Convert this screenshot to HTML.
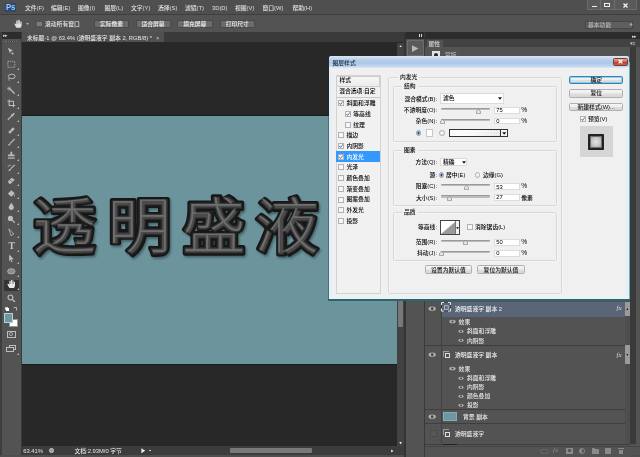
<!DOCTYPE html>
<html lang="zh-CN">
<head>
<meta charset="utf-8">
<title>Photoshop - 图层样式</title>
<style>
html,body{margin:0;padding:0;}
body{width:640px;height:457px;overflow:hidden;background:#535353;position:relative;
 font-family:"Liberation Sans","Noto Sans CJK SC",sans-serif;font-size:5.8px;line-height:8px;color:#dcdcdc;font-weight:500;}
div,span,svg{position:absolute;box-sizing:border-box;}
.t{white-space:nowrap;line-height:8px;height:8px;}
.r{text-align:right;}
.c{text-align:center;}
/* top */
#menubar{left:0;top:0;width:640px;height:14px;background:#4f4f4f;}
#menubar .t{top:4px;color:#e0e0e0;}
#optbar{left:0;top:15px;width:640px;height:17px;background:#535353;}
.ob{top:5px;height:8px;background:#6b6b6b;border:0.5px solid #484848;border-radius:1px;color:#f0f0f0;text-align:center;line-height:7px;white-space:nowrap;}
#tabbar{left:22px;top:32px;width:383px;height:10.3px;background:#3a3a3a;}
#tab{left:0;top:0;width:142px;height:10.3px;background:#505050;}
#work{left:22px;top:42.3px;width:383px;height:403.7px;background:#282828;}
#canvas{left:22px;top:116.4px;width:375px;height:247.8px;background:#6b949d;overflow:hidden;}
#tools{left:0;top:32px;width:22px;height:425px;background:#535353;}
/* dialog */
#dlg{left:329px;top:56px;width:300.2px;height:243.6px;background:#f0f0f0;color:#000;border-radius:2.5px 2.5px 0 0;}
#dlg .t{color:#000;font-weight:500;}
.gb{border:0.8px solid #d8d8d8;border-radius:1.5px;box-shadow:0.5px 0.5px 0 #fafafa, inset 0.5px 0.5px 0 #fafafa;}
.gl{background:#f0f0f0;padding:0 2px;}
.inp{background:#fff;border:0.5px solid #dcdcdc;height:7px;}
.btn{height:9px;font-weight:500;border:0.5px solid #b0b0b0;border-radius:1.5px;background:linear-gradient(#f5f5f5,#ededed 48%,#e0e0e0 52%,#d6d6d6);color:#111;text-align:center;line-height:8px;white-space:nowrap;}
.sl{height:2.2px;background:#bcbcbc;border-top:0.7px solid #9a9a9a;border-radius:1px;}
.cb{width:6px;height:6px;background:#f7f7f7;border:0.6px solid #b2b2b2;}
.row{left:0;width:45px;height:10.7px;}
</style>
</head>
<body>
<div id="root" style="left:0;top:0;width:640px;height:457px;will-change:transform;">
<!-- MENU BAR -->
<div id="menubar">
  <div style="left:4.8px;top:2.6px;width:11.6px;height:9.6px;background:#2a4a74;"></div>
  <span class="t" style="left:6.2px;top:2px;font-size:9.6px;line-height:10px;height:10px;font-weight:bold;color:#9ecbf6;letter-spacing:-0.2px;transform:scaleX(0.8);transform-origin:0 0">Ps</span>
  <span class="t" style="left:25px">文件(F)</span>
  <span class="t" style="left:51px">编辑(E)</span>
  <span class="t" style="left:78px">图像(I)</span>
  <span class="t" style="left:104.5px">图层(L)</span>
  <span class="t" style="left:131px">文字(Y)</span>
  <span class="t" style="left:158px">选择(S)</span>
  <span class="t" style="left:185px">滤镜(T)</span>
  <span class="t" style="left:212px">3D(D)</span>
  <span class="t" style="left:235px">视图(V)</span>
  <span class="t" style="left:262.5px">窗口(W)</span>
  <span class="t" style="left:292.5px">帮助(H)</span>
</div>
<div style="left:0;top:13.6px;width:640px;height:1px;background:#3e3e3e"></div><div style="left:0;top:14.6px;width:640px;height:0.7px;background:#5d5d5d"></div>
<div style="left:85px;top:16px;width:0.8px;height:15px;background:#404040"></div><div style="left:85.8px;top:16px;width:0.6px;height:15px;background:#5e5e5e"></div>
<div style="left:0;top:15px;width:1.6px;height:17px;background:#3e3e3e"></div>
<!-- OPTIONS BAR -->
<div id="optbar">
  <svg style="left:13.5px;top:4px" width="9" height="9" viewBox="0 0 10 10"><path d="M2.6 9.6Q1 7.4 0.4 5.4Q1.3 4.6 2.5 6.2V2.2Q3.1 1.4 3.7 2.2V5H4.1V1.2Q4.7 0.4 5.3 1.2V5H5.7V1.8Q6.3 1 6.9 1.8V5.2H7.3V3.2Q7.9 2.5 8.5 3.2V7Q8.2 8.8 7.4 9.6Z" fill="#e0e0e0"/></svg>
  <svg style="left:25.5px;top:8px" width="3" height="2" viewBox="0 0 4 3"><path d="M0 0.3H4L2 2.8Z" fill="#ddd"/></svg>
  <div style="left:37px;top:6.6px;width:4.6px;height:4.8px;background:#7c7c7c"></div>
  <span class="t" style="left:45px;top:5px;color:#e8e8e8">滚动所有窗口</span>
  <div class="ob" style="left:94px;width:35px">实际像素</div>
  <div class="ob" style="left:135.5px;width:35px">适合屏幕</div>
  <div class="ob" style="left:177px;width:35.5px">填充屏幕</div>
  <div class="ob" style="left:219.5px;width:35.5px">打印尺寸</div>
</div>
<!-- TAB BAR / WORK AREA -->
<div id="tabbar"><div id="tab"><span class="t" style="left:5px;top:2px;color:#e6e6e6">未标题-1 @ 63.4% (透明盛液字 副本 2, RGB/8) *</span><span class="t" style="left:134px;top:2px;color:#ccc">×</span></div></div>
<div id="work"></div>
<div style="left:22px;top:115.2px;width:376px;height:249.8px;background:#181c1c"></div>
<div id="canvas">
<svg style="left:0;top:0" width="375" height="248" viewBox="0 0 375 248">
<defs>
<filter id="sh" x="-5%" y="-10%" width="110%" height="125%"><feGaussianBlur stdDeviation="1.2"/></filter>
<filter id="hl" x="-5%" y="-10%" width="110%" height="120%"><feGaussianBlur stdDeviation="0.7"/></filter>
</defs>
<g font-family="'Noto Sans CJK SC',sans-serif" font-size="64" font-weight="500" stroke-linejoin="round" stroke-linecap="round">
<g id="bigtext" transform="translate(0,132.8) scale(1,0.965) translate(0,-132.3)">
<text y="132.3" fill="#000" stroke="#000" stroke-width="4" opacity="0.35" filter="url(#sh)" transform="translate(1.2,2)" font-weight="700"><tspan x="10.5">透</tspan><tspan x="85.5">明</tspan><tspan x="160">盛</tspan><tspan x="233">液</tspan></text>
<text y="132.3" fill="#171717" stroke="#171717" stroke-width="4.2" font-weight="700"><tspan x="10.5">透</tspan><tspan x="85.5">明</tspan><tspan x="160">盛</tspan><tspan x="233">液</tspan></text>
<text y="132.3" fill="#4a4a4a" stroke="#2a2a2a" stroke-width="1.2" font-weight="500"><tspan x="10.5">透</tspan><tspan x="85.5">明</tspan><tspan x="160">盛</tspan><tspan x="233">液</tspan></text>
<text y="132.3" fill="#9a9a9a" opacity="0.45" filter="url(#hl)" transform="translate(-0.3,-0.5)" font-weight="100"><tspan x="10.5">透</tspan><tspan x="85.5">明</tspan><tspan x="160">盛</tspan><tspan x="233">液</tspan></text>
</g>
</g>
</svg>
</div>
<div id="tools">
<div style="left:0;top:0;width:1.6px;height:425px;background:#3e3e3e"></div>
<div style="left:1.6px;top:0;width:19px;height:6.5px;background:#2c2c2c"></div>
<span class="t" style="left:3px;top:-1px;font-size:5px;color:#ccc;letter-spacing:-1.5px">▸▸</span>
<div style="left:20.8px;top:0;width:1.2px;height:425px;background:#3a3a3a"></div>
<div style="left:5px;top:8.5px;width:12px;height:1px;background:#3f3f3f;border-top:0.5px dotted #777"></div>
<svg style="left:7.1px;top:15.2px" width="8.6" height="8.6" viewBox="0 0 10 10"><path d="M1 1L7 4L4.5 5L3.5 7.5Z" fill="#bdbdbd"/><path d="M6.5 6v3M5 7.5h3" stroke="#bdbdbd" stroke-width="0.9"/></svg>
<svg style="left:7.1px;top:28.2px" width="8.6" height="8.6" viewBox="0 0 10 10"><rect x="1" y="1.5" width="8" height="7" fill="none" stroke="#bdbdbd" stroke-width="1" stroke-dasharray="1.2 1"/></svg>
<svg style="left:16.8px;top:36.0px" width="2" height="2" viewBox="0 0 2 2"><path d="M2 0V2H0Z" fill="#bbb"/></svg>
<svg style="left:7.1px;top:41.2px" width="8.6" height="8.6" viewBox="0 0 10 10"><ellipse cx="5.5" cy="4" rx="4" ry="2.6" fill="none" stroke="#bdbdbd" stroke-width="1.1"/><path d="M2.5 6Q1.5 7.5 2.5 9" stroke="#bdbdbd" fill="none" stroke-width="0.9"/></svg>
<svg style="left:16.8px;top:49.0px" width="2" height="2" viewBox="0 0 2 2"><path d="M2 0V2H0Z" fill="#bbb"/></svg>
<svg style="left:7.1px;top:54.2px" width="8.6" height="8.6" viewBox="0 0 10 10"><path d="M3.5 3.5L9 9" stroke="#bdbdbd" stroke-width="1.4"/><path d="M2.5 0.5v5M0 3h5M0.8 1.2l3.4 3.4M4.2 1.2L0.8 4.6" stroke="#bdbdbd" stroke-width="0.7"/></svg>
<svg style="left:16.8px;top:62.0px" width="2" height="2" viewBox="0 0 2 2"><path d="M2 0V2H0Z" fill="#bbb"/></svg>
<svg style="left:7.1px;top:67.2px" width="8.6" height="8.6" viewBox="0 0 10 10"><path d="M2.5 0.5V7.5H9.5M0.5 2.5H7.5V9.5" stroke="#bdbdbd" stroke-width="1.2" fill="none"/></svg>
<svg style="left:16.8px;top:75.0px" width="2" height="2" viewBox="0 0 2 2"><path d="M2 0V2H0Z" fill="#bbb"/></svg>
<svg style="left:7.1px;top:80.2px" width="8.6" height="8.6" viewBox="0 0 10 10"><path d="M1 9L5.5 4.5" stroke="#bdbdbd" stroke-width="1.3"/><path d="M5 3L7 5M6 4L8.5 1.5" stroke="#bdbdbd" stroke-width="1.8"/></svg>
<svg style="left:16.8px;top:88.0px" width="2" height="2" viewBox="0 0 2 2"><path d="M2 0V2H0Z" fill="#bbb"/></svg>
<svg style="left:7.1px;top:93.7px" width="8.6" height="8.6" viewBox="0 0 10 10"><path d="M1.5 7L7 1.5L9 3.5L3.5 9Z" fill="#bdbdbd"/><path d="M4 5L5.5 6.5" stroke="#555" stroke-width="0.8"/></svg>
<svg style="left:16.8px;top:101.5px" width="2" height="2" viewBox="0 0 2 2"><path d="M2 0V2H0Z" fill="#bbb"/></svg>
<svg style="left:7.1px;top:106.2px" width="8.6" height="8.6" viewBox="0 0 10 10"><path d="M9 1L4 6" stroke="#bdbdbd" stroke-width="1.4"/><path d="M3.8 5.8Q1.5 6.5 1 9Q3.5 8.8 4.4 6.6Z" fill="#bdbdbd"/></svg>
<svg style="left:16.8px;top:114.0px" width="2" height="2" viewBox="0 0 2 2"><path d="M2 0V2H0Z" fill="#bbb"/></svg>
<svg style="left:7.1px;top:119.2px" width="8.6" height="8.6" viewBox="0 0 10 10"><path d="M4 1h2v3.2h2.8v2H1.2v-2H4Z" fill="#bdbdbd"/><rect x="1" y="7.5" width="8" height="1.4" fill="#bdbdbd"/></svg>
<svg style="left:16.8px;top:127.0px" width="2" height="2" viewBox="0 0 2 2"><path d="M2 0V2H0Z" fill="#bbb"/></svg>
<svg style="left:7.1px;top:131.7px" width="8.6" height="8.6" viewBox="0 0 10 10"><path d="M9 1L4.5 5.5" stroke="#bdbdbd" stroke-width="1.3"/><path d="M4.2 5.3Q2 6 1.5 8.5Q4 8.3 4.8 6.2Z" fill="#bdbdbd"/><path d="M1 3.5A3 3 0 0 1 5 1.5" stroke="#bdbdbd" fill="none" stroke-width="0.8"/></svg>
<svg style="left:16.8px;top:139.5px" width="2" height="2" viewBox="0 0 2 2"><path d="M2 0V2H0Z" fill="#bbb"/></svg>
<svg style="left:7.1px;top:144.2px" width="8.6" height="8.6" viewBox="0 0 10 10"><path d="M1 6.5L5.5 2L9 4.5L4.5 9H2.5Z" fill="#bdbdbd"/><path d="M3 4.5L6.5 7" stroke="#555" stroke-width="0.7"/></svg>
<svg style="left:16.8px;top:152.0px" width="2" height="2" viewBox="0 0 2 2"><path d="M2 0V2H0Z" fill="#bbb"/></svg>
<svg style="left:7.1px;top:157.2px" width="8.6" height="8.6" viewBox="0 0 10 10"><path d="M1 5.5L5 1.5L9 5L5 9Z" fill="#bdbdbd"/><path d="M8.5 6Q9.8 8 8.5 9Q7.4 8 8.5 6Z" fill="#bdbdbd"/></svg>
<svg style="left:16.8px;top:165.0px" width="2" height="2" viewBox="0 0 2 2"><path d="M2 0V2H0Z" fill="#bbb"/></svg>
<svg style="left:7.1px;top:169.7px" width="8.6" height="8.6" viewBox="0 0 10 10"><path d="M5 0.8Q8.5 5 8 7Q7.2 9.3 5 9.3Q2.8 9.3 2 7Q1.5 5 5 0.8Z" fill="#bdbdbd"/></svg>
<svg style="left:16.8px;top:177.5px" width="2" height="2" viewBox="0 0 2 2"><path d="M2 0V2H0Z" fill="#bbb"/></svg>
<svg style="left:7.1px;top:182.7px" width="8.6" height="8.6" viewBox="0 0 10 10"><circle cx="4" cy="4" r="3" fill="#bdbdbd"/><path d="M6 6L9 9" stroke="#bdbdbd" stroke-width="1.5"/></svg>
<svg style="left:16.8px;top:190.5px" width="2" height="2" viewBox="0 0 2 2"><path d="M2 0V2H0Z" fill="#bbb"/></svg>
<svg style="left:7.1px;top:195.7px" width="8.6" height="8.6" viewBox="0 0 10 10"><path d="M2 1L8 7L6 7.5L5 9.5Z" fill="none" stroke="#bdbdbd" stroke-width="0.9"/></svg>
<svg style="left:16.8px;top:203.5px" width="2" height="2" viewBox="0 0 2 2"><path d="M2 0V2H0Z" fill="#bbb"/></svg>
<span class="t" style="left:8.6px;top:208.6px;font-family:'Liberation Serif',serif;font-size:9.6px;font-weight:bold;color:#c4c4c4;line-height:10px;height:10px">T</span>
<svg style="left:16.8px;top:217.5px" width="2" height="2" viewBox="0 0 2 2"><path d="M2 0V2H0Z" fill="#bbb"/></svg>
<svg style="left:7.1px;top:222.2px" width="8.6" height="8.6" viewBox="0 0 10 10"><path d="M2.5 0.5L8 6H5.2L6.5 9L5.2 9.5L4 6.6L2.5 8.5Z" fill="#bdbdbd"/></svg>
<svg style="left:16.8px;top:230.0px" width="2" height="2" viewBox="0 0 2 2"><path d="M2 0V2H0Z" fill="#bbb"/></svg>
<svg style="left:7.1px;top:234.7px" width="8.6" height="8.6" viewBox="0 0 10 10"><ellipse cx="5" cy="5" rx="4.3" ry="3" fill="#8a8a8a" stroke="#bdbdbd" stroke-width="0.9"/></svg>
<svg style="left:16.8px;top:242.5px" width="2" height="2" viewBox="0 0 2 2"><path d="M2 0V2H0Z" fill="#bbb"/></svg>
<div style="left:4.2px;top:247.6px;width:14.6px;height:11px;background:#343434;border-radius:1px"></div>
<svg style="left:6.7px;top:247.3px" width="9.4" height="9.4" viewBox="0 0 10 10"><path d="M2.6 9.6Q1 7.4 0.4 5.4Q1.3 4.6 2.5 6.2V2.2Q3.1 1.4 3.7 2.2V5H4.1V1.2Q4.7 0.4 5.3 1.2V5H5.7V1.8Q6.3 1 6.9 1.8V5.2H7.3V3.2Q7.9 2.5 8.5 3.2V7Q8.2 8.8 7.4 9.6Z" fill="#e8e8e8"/></svg>
<svg style="left:16.8px;top:255.5px" width="2" height="2" viewBox="0 0 2 2"><path d="M2 0V2H0Z" fill="#bbb"/></svg>
<svg style="left:7.1px;top:261.7px" width="8.6" height="8.6" viewBox="0 0 10 10"><circle cx="4" cy="4" r="2.8" fill="none" stroke="#bdbdbd" stroke-width="1.3"/><path d="M6 6L9.3 9.3" stroke="#bdbdbd" stroke-width="1.6"/></svg>
<div style="left:4.5px;top:274.5px;width:3px;height:3px;background:#111;border:0.5px solid #ccc"></div>
<div style="left:6px;top:276px;width:3px;height:3px;background:#fff"></div>
<svg style="left:13px;top:274px" width="5" height="5" viewBox="0 0 5 5"><path d="M0.5 1.5H3.5V4.5" stroke="#ccc" fill="none" stroke-width="0.8"/></svg>
<div style="left:9.3px;top:286.6px;width:9px;height:8.4px;background:#fff;border:0.5px solid #999"></div>
<div style="left:4.2px;top:281px;width:8.8px;height:9.8px;background:#6c98a6;border:0.8px solid #b9d0d6"></div>
<div style="left:6.5px;top:299.3px;width:9px;height:7px;border:0.9px solid #bdbdbd"></div>
<div style="left:9.3px;top:300.3px;width:3.4px;height:3.4px;border-radius:50%;border:0.8px solid #bdbdbd"></div>
<div style="left:8.5px;top:312.8px;width:7.5px;height:5.5px;border:0.9px solid #bdbdbd"></div>
<div style="left:6px;top:314.8px;width:7.5px;height:5.5px;border:0.9px solid #bdbdbd;background:#535353"></div>
<svg style="left:16.8px;top:320.5px" width="2" height="2" viewBox="0 0 2 2"><path d="M2 0V2H0Z" fill="#bbb"/></svg>
</div>


<!-- STATUS BAR -->
<div style="left:22px;top:446px;width:382px;height:9px;background:#3c3c3c"></div>
<div style="left:0;top:455px;width:640px;height:2px;background:#4e4e4e"></div>
<span class="t" style="left:23.2px;top:446.7px;color:#e4e4e4">63.41%</span>
<div style="left:49.2px;top:448.2px;width:4.6px;height:4.6px;border-radius:50%;background:#9c9c9c;border:0.8px solid #c4c4c4"></div>
<span class="t" style="left:74.5px;top:446.7px;color:#e4e4e4">文档:2.93M/0 字节</span>
<svg style="left:141px;top:448px" width="4.5" height="5.5" viewBox="0 0 4 5"><path d="M0.3 0.2L3.8 2.5L0.3 4.8Z" fill="#eee"/></svg>
<div style="left:149.3px;top:450px;width:1.4px;height:1.4px;background:#ccc"></div>
<div style="left:230px;top:447.7px;width:82px;height:5.8px;background:#797979;border-radius:1px"></div>
<svg style="left:391.4px;top:449.4px" width="2.6" height="3.8" viewBox="0 0 4 5"><path d="M0.3 0.2L3.8 2.5L0.3 4.8Z" fill="#eee"/></svg>
<!-- vertical scrollbar -->
<div style="left:397px;top:43px;width:7px;height:403px;background:#434242"></div>
<div style="left:397.8px;top:57px;width:5.7px;height:269.5px;background:#787878;border-radius:1px"></div>
<svg style="left:399px;top:45px" width="3.2" height="2.4" viewBox="0 0 5 4"><path d="M0.2 3.8L2.5 0.3L4.8 3.8Z" fill="#eee"/></svg>
<svg style="left:399px;top:442.2px" width="3.2" height="2.4" viewBox="0 0 5 4"><path d="M0.2 0.2L2.5 3.7L4.8 0.2Z" fill="#eee"/></svg>
<!-- RIGHT DOCK -->
<div style="left:405px;top:32px;width:235px;height:7px;background:#2c2c2c"></div>
<div style="left:419.2px;top:33.6px;width:1px;height:3px;background:#d8d8d8"></div><div style="left:421.2px;top:33.6px;width:1px;height:3px;background:#d8d8d8"></div>
<span class="t" style="left:632px;top:31.5px;font-size:5px;color:#ccc;letter-spacing:-1.5px">▸▸</span>
<div style="left:404px;top:32px;width:1.5px;height:425px;background:#343434"></div>
<div style="left:405.5px;top:39px;width:19px;height:418px;background:#535353"></div>
<div style="left:407px;top:40px;width:16.5px;height:16px;background:#5a5a5a;border:0.6px solid #6c6c6c"></div>
<svg style="left:411px;top:43.5px" width="9" height="9" viewBox="0 0 9 9"><path d="M1 1.2 L7.4 4.6 L1 8Z" fill="#b8b8b8"/></svg>
<div style="left:424px;top:32px;width:1.2px;height:425px;background:#3a3a3a"></div>
<!-- properties panel stub -->
<div style="left:425px;top:39px;width:215px;height:8px;background:#424242"></div>
<div style="left:426.5px;top:39.5px;width:16.5px;height:7.5px;background:#535353"></div>
<span class="t" style="left:428.5px;top:39.5px;color:#e0e0e0">属性</span>
<span class="t" style="left:629.5px;top:39px;font-size:5px;color:#ccc">▾≡</span>
<div style="left:425px;top:47px;width:215px;height:10px;background:#535353"></div>
<div style="left:432.2px;top:51.2px;width:8.2px;height:6px;background:#e4e4e4"></div>
<div style="left:434.2px;top:52.8px;width:4.2px;height:4px;background:#2a2a2a;border-radius:2px 2px 0 0"></div>
<span class="t" style="left:445px;top:50.6px;color:#b0b0b0">蒙版</span>
<!-- window controls -->
<div style="left:587px;top:0;width:49.5px;height:10px;background:#5a5a5a;border:0.6px solid #6a6a6a;border-top:none"></div>
<div style="left:600px;top:0;width:0.8px;height:10px;background:#6e6e6e"></div>
<div style="left:614px;top:0;width:0.8px;height:10px;background:#6e6e6e"></div>
<div style="left:591.5px;top:5.5px;width:5px;height:1.6px;background:#f0f0f0"></div>
<div style="left:604px;top:2.5px;width:5.5px;height:4.5px;border:1.1px solid #f0f0f0;border-top-width:1.6px"></div>
<svg style="left:622.5px;top:2.5px" width="5" height="5" viewBox="0 0 5 5"><path d="M0.5 0.5L4.5 4.5M4.5 0.5L0.5 4.5" stroke="#f4f4f4" stroke-width="1.3"/></svg>
<!-- workspace switcher -->
<div style="left:585px;top:20.5px;width:48px;height:8px;background:#5f5f5f;border:0.6px solid #464646"></div>
<span class="t" style="left:588px;top:20.5px;color:#b4b4b4">基本功能</span>
<span class="t" style="left:629.5px;top:20.5px;font-size:3.2px;color:#aaa">◆</span>
<!-- right edge -->
<div style="left:629.6px;top:47px;width:6.8px;height:397px;background:#3a3a3a"></div>

<!-- LAYERS PANEL -->
<div id="layers" style="left:425px;top:301px;width:204.6px;height:156px;background:#535353">
  <div style="left:16px;top:0;width:0.8px;height:143px;background:#424242"></div>
  <div style="left:16.8px;top:0.8px;width:183.5px;height:14.8px;background:#5a6578"></div>
  <div style="left:0;top:43.5px;width:204.6px;height:0.8px;background:#3e3e3e"></div>
  <div style="left:0;top:108px;width:204.6px;height:0.8px;background:#3e3e3e"></div>
  <div style="left:0;top:122px;width:204.6px;height:0.8px;background:#3e3e3e"></div>
  <div style="left:0;top:142.5px;width:204.6px;height:0.8px;background:#3e3e3e"></div>
  <div style="left:0;top:144.5px;width:215px;height:0.8px;background:#454545"></div>
  <!-- scroll bits -->
  <div style="left:200.2px;top:0;width:4.4px;height:143px;background:#4e4e4e"></div>
  <div style="left:200.2px;top:0.8px;width:4.4px;height:14.7px;background:#9a9a9a"></div>
  <div style="left:200.2px;top:43.6px;width:4.4px;height:19px;background:#9a9a9a"></div>
  <span class="t" style="left:200.6px;top:3.5px;font-size:3.6px;color:#222">▲</span>
  <span class="t" style="left:200.6px;top:50px;font-size:3.6px;color:#222">▼</span>
  <!-- layer 1 -->
  <svg class="eye" style="left:3px;top:4.5px" width="8.4" height="5.4" viewBox="0 0 9 6"><ellipse cx="4.5" cy="3" rx="4" ry="2.4" fill="#b4b4b4"/><circle cx="4.5" cy="3" r="1.6" fill="#484848"/></svg>
  <svg style="left:16px;top:1.2px" width="10" height="9.6" viewBox="0 0 10 9.6"><rect x="0.5" y="0.5" width="9" height="8.6" fill="none" stroke="#26303f" stroke-width="1" stroke-dasharray="1 1"/><path d="M0.5 3V0.5H3M7 0.5H9.5V3M9.5 6.6V9.1H7M3 9.1H0.5V6.6" fill="none" stroke="#e6e6e6" stroke-width="1"/><rect x="3.4" y="3.7" width="3.8" height="3.6" fill="none" stroke="#c8c8c8" stroke-width="0.8"/></svg>
  
  <span class="t" style="left:30px;top:3.5px;color:#f0f0f0">透明盛液字 副本 2</span>
  <span class="t" style="left:191.5px;top:3px;font-family:'Liberation Serif',serif;font-style:italic;font-size:7px;color:#ddd">fx</span>
  <svg class="eye" style="left:24.4px;top:18px" width="7" height="5" viewBox="0 0 9 6"><ellipse cx="4.5" cy="3" rx="4" ry="2.4" fill="#b4b4b4"/><circle cx="4.5" cy="3" r="1.4" fill="#444"/></svg>
  <span class="t" style="left:33.6px;top:16.5px;color:#e8e8e8">效果</span>
  <svg class="eye" style="left:32.8px;top:27.5px" width="6" height="4.5" viewBox="0 0 9 6"><ellipse cx="4.5" cy="3" rx="4" ry="2.4" fill="#b4b4b4"/><circle cx="4.5" cy="3" r="1.4" fill="#444"/></svg>
  <span class="t" style="left:42px;top:26px;color:#e8e8e8">斜面和浮雕</span>
  <svg class="eye" style="left:32.8px;top:37px" width="6" height="4.5" viewBox="0 0 9 6"><ellipse cx="4.5" cy="3" rx="4" ry="2.4" fill="#b4b4b4"/><circle cx="4.5" cy="3" r="1.4" fill="#444"/></svg>
  <span class="t" style="left:42px;top:35.5px;color:#e8e8e8">内阴影</span>
  <!-- layer 2 -->
  <svg class="eye" style="left:3px;top:51px" width="8.4" height="5.4" viewBox="0 0 9 6"><ellipse cx="4.5" cy="3" rx="4" ry="2.4" fill="#b4b4b4"/><circle cx="4.5" cy="3" r="1.6" fill="#484848"/></svg>
  <div style="left:17.5px;top:49.5px;width:6px;height:1px;background:#999"></div>
  <div style="left:17.5px;top:49.5px;width:1px;height:6px;background:#999"></div>
  <div style="left:20.4px;top:52px;width:4.6px;height:5px;border:0.8px solid #ddd"></div>
  <span class="t" style="left:30px;top:50px;color:#f0f0f0">透明盛液字 副本</span>
  <span class="t" style="left:191.5px;top:49.5px;font-family:'Liberation Serif',serif;font-style:italic;font-size:7px;color:#ddd">fx</span>
  <svg class="eye" style="left:24.4px;top:65px" width="7" height="5" viewBox="0 0 9 6"><ellipse cx="4.5" cy="3" rx="4" ry="2.4" fill="#b4b4b4"/><circle cx="4.5" cy="3" r="1.4" fill="#444"/></svg>
  <span class="t" style="left:33.6px;top:63.5px;color:#e8e8e8">效果</span>
  <svg class="eye" style="left:32.8px;top:74.5px" width="6" height="4.5" viewBox="0 0 9 6"><ellipse cx="4.5" cy="3" rx="4" ry="2.4" fill="#b4b4b4"/><circle cx="4.5" cy="3" r="1.4" fill="#444"/></svg>
  <span class="t" style="left:42px;top:73px;color:#e8e8e8">斜面和浮雕</span>
  <svg class="eye" style="left:32.8px;top:83.5px" width="6" height="4.5" viewBox="0 0 9 6"><ellipse cx="4.5" cy="3" rx="4" ry="2.4" fill="#b4b4b4"/><circle cx="4.5" cy="3" r="1.4" fill="#444"/></svg>
  <span class="t" style="left:42px;top:82px;color:#e8e8e8">内阴影</span>
  <svg class="eye" style="left:32.8px;top:92.5px" width="6" height="4.5" viewBox="0 0 9 6"><ellipse cx="4.5" cy="3" rx="4" ry="2.4" fill="#b4b4b4"/><circle cx="4.5" cy="3" r="1.4" fill="#444"/></svg>
  <span class="t" style="left:42px;top:91px;color:#e8e8e8">颜色叠加</span>
  <svg class="eye" style="left:32.8px;top:101.5px" width="6" height="4.5" viewBox="0 0 9 6"><ellipse cx="4.5" cy="3" rx="4" ry="2.4" fill="#b4b4b4"/><circle cx="4.5" cy="3" r="1.4" fill="#444"/></svg>
  <span class="t" style="left:42px;top:100px;color:#e8e8e8">投影</span>
  <!-- layer 3 -->
  <svg class="eye" style="left:3px;top:112.5px" width="8.4" height="5.4" viewBox="0 0 9 6"><ellipse cx="4.5" cy="3" rx="4" ry="2.4" fill="#b4b4b4"/><circle cx="4.5" cy="3" r="1.6" fill="#484848"/></svg>
  <div style="left:17.8px;top:111px;width:14.5px;height:9px;background:#6c98a6;border:0.6px solid #88aab4"></div>
  <span class="t" style="left:38px;top:112px;color:#f0f0f0">背景 副本</span>
  <!-- layer 4 -->
  <div style="left:5px;top:129px;width:6.5px;height:6.5px;background:#585858;border:0.5px solid #4a4a4a"></div>
  <div style="left:17.5px;top:128px;width:6px;height:1px;background:#999"></div>
  <div style="left:17.5px;top:128px;width:1px;height:6px;background:#999"></div>
  <div style="left:20.4px;top:130.5px;width:4.6px;height:5px;border:0.8px solid #ddd"></div>
  <span class="t" style="left:30px;top:128.5px;color:#e8e8e8">透明盛液字</span>
  <div style="left:17.8px;top:143.3px;width:14.5px;height:1.2px;background:#222"></div>
  <!-- bottom icons -->
  <span class="t" style="left:115px;top:146px;font-size:5px;color:#777;letter-spacing:-1px">⊂⊃</span>
  <span class="t" style="left:128px;top:145px;font-family:'Liberation Serif',serif;font-style:italic;font-size:7px;color:#8a8a8a">fx</span>
  <div style="left:141px;top:147px;width:6.5px;height:5.5px;background:#8a8a8a"></div>
  <div style="left:143px;top:148.3px;width:2.6px;height:2.6px;background:#535353;border-radius:50%"></div>
  <div style="left:154px;top:147px;width:5.5px;height:5.5px;border-radius:50%;background:linear-gradient(90deg,#8a8a8a 50%,#555 50%);border:0.8px solid #8a8a8a"></div>
  <div style="left:167px;top:148px;width:6.5px;height:4.5px;background:#8a8a8a"></div>
  <div style="left:167px;top:147px;width:3px;height:1.5px;background:#8a8a8a"></div>
  <div style="left:180px;top:147px;width:5.5px;height:5.5px;background:#8a8a8a"></div>
  <div style="left:193.5px;top:148.5px;width:4.5px;height:4.5px;background:#8a8a8a"></div>
  <div style="left:192.8px;top:147px;width:6px;height:1.2px;background:#8a8a8a"></div>
</div>

<!-- DIALOG -->
<div id="dlg">
<div style="left:0;top:0;width:300.2px;height:11.5px;border-radius:2.5px 2.5px 0 0;background:linear-gradient(#dbe7f4 0%,#b9d1eb 30%,#a9c7e7 58%,#c6d9ee 88%,#dce7f3 100%)"></div>
<div style="left:0;top:11px;width:3px;height:232.6px;background:#e6eef6"></div>
<div style="left:297.4px;top:11px;width:2.8px;height:232.6px;background:#e6eef6"></div>
<div style="left:0;top:240.4px;width:300.2px;height:3.2px;background:#eaf2f8"></div>
<div style="left:-0.8px;top:2px;width:0.8px;height:242px;background:rgba(20,40,50,0.35)"></div>
<div style="left:299.6px;top:6px;width:0.6px;height:237.6px;background:#6ab4be"></div>
<div style="left:-0.8px;top:243.4px;width:301.4px;height:1.3px;background:#2c666b"></div>
<span class="t" style="left:3.5px;top:2.5px;color:#1c2a3c">图层样式</span>
<div style="left:283.5px;top:1.5px;width:15px;height:8.5px;border-radius:1.5px;border:0.6px solid #7d3a32;background:linear-gradient(#e2a197,#cf6a5a 45%,#b93a28 50%,#c9604c)"></div>
<svg style="left:288.5px;top:3.3px" width="5" height="5" viewBox="0 0 5 5"><path d="M0.6 0.6L4.4 4.4M4.4 0.6L0.6 4.4" stroke="#fff" stroke-width="1.3"/></svg>
<div style="left:6.6px;top:19px;width:45.4px;height:218.5px;background:#f1f1f1;border:0.7px solid #d6d2cf"></div>
<div style="left:7.3px;top:19.6px;width:44px;height:11px;background:linear-gradient(#f6f6f6,#ececec);border:0.6px solid #cdcdcd"></div>
<span class="t" style="left:10.4px;top:19.5px">样式</span>
<div style="left:7.3px;top:41.3px;width:44px;height:0.6px;background:#c8c8c8"></div>
<span class="t" style="left:10.2px;top:31.2px">混合选项:自定</span>
<div class="cb" style="left:9.3px;top:44.2px"></div>
<svg style="left:9.3px;top:44.2px" width="6" height="6" viewBox="0 0 6 6"><path d="M1.3 3L2.6 4.5L4.8 1.4" stroke="#52629a" stroke-width="0.9" fill="none"/></svg>
<span class="t" style="left:17.5px;top:43.1px">斜面和浮雕</span>
<div class="cb" style="left:16.1px;top:54.91px"></div>
<svg style="left:16.1px;top:54.91px" width="6" height="6" viewBox="0 0 6 6"><path d="M1.3 3L2.6 4.5L4.8 1.4" stroke="#52629a" stroke-width="0.9" fill="none"/></svg>
<span class="t" style="left:24.3px;top:53.81px">等高线</span>
<div class="cb" style="left:16.1px;top:65.62px"></div>
<span class="t" style="left:24.3px;top:64.52px">纹理</span>
<div class="cb" style="left:9.3px;top:76.33px"></div>
<span class="t" style="left:17.5px;top:75.23px">描边</span>
<div class="cb" style="left:9.3px;top:87.04px"></div>
<svg style="left:9.3px;top:87.04px" width="6" height="6" viewBox="0 0 6 6"><path d="M1.3 3L2.6 4.5L4.8 1.4" stroke="#52629a" stroke-width="0.9" fill="none"/></svg>
<span class="t" style="left:17.5px;top:85.94px">内阴影</span>
<div style="left:7.3px;top:95.45px;width:44px;height:10.7px;background:#3399ff"></div>
<div class="cb" style="left:9.3px;top:97.75px"></div>
<svg style="left:9.3px;top:97.75px" width="6" height="6" viewBox="0 0 6 6"><path d="M1.3 3L2.6 4.5L4.8 1.4" stroke="#52629a" stroke-width="0.9" fill="none"/></svg>
<span class="t" style="left:17.5px;top:96.65px;color:#fff">内发光</span>
<div class="cb" style="left:9.3px;top:108.46px"></div>
<span class="t" style="left:17.5px;top:107.36px">光泽</span>
<div class="cb" style="left:9.3px;top:119.17px"></div>
<span class="t" style="left:17.5px;top:118.07px">颜色叠加</span>
<div class="cb" style="left:9.3px;top:129.88px"></div>
<span class="t" style="left:17.5px;top:128.78px">渐变叠加</span>
<div class="cb" style="left:9.3px;top:140.59px"></div>
<span class="t" style="left:17.5px;top:139.49px">图案叠加</span>
<div class="cb" style="left:9.3px;top:151.3px"></div>
<span class="t" style="left:17.5px;top:150.2px">外发光</span>
<div class="cb" style="left:9.3px;top:162.01px"></div>
<span class="t" style="left:17.5px;top:160.91px">投影</span>
<div class="gb" style="left:59.2px;top:20.5px;width:174.3px;height:217.5px"></div>
<span class="t gl" style="left:69px;top:16.6px">内发光</span>
<div class="gb" style="left:64.2px;top:29.5px;width:163.8px;height:56.5px"></div>
<span class="t gl" style="left:73px;top:25.6px">结构</span>
<div class="gb" style="left:64.2px;top:93.5px;width:163.8px;height:56.5px"></div>
<span class="t gl" style="left:73px;top:89.6px">图素</span>
<div class="gb" style="left:64.2px;top:156.3px;width:163.8px;height:48.7px"></div>
<span class="t gl" style="left:73px;top:152.4px">品质</span>
<span class="t r" style="left:58px;top:38.7px;width:50px">混合模式(B):</span>
<div style="left:111px;top:37.3px;width:64px;height:10.3px;background:#fff;border:0.5px solid #dadada"></div>
<span class="t" style="left:114px;top:38.35px">滤色</span>
<svg style="left:169px;top:41.25px" width="4" height="3" viewBox="0 0 4 3"><path d="M0 0.3H4L2 2.8Z" fill="#111"/></svg>
<span class="t r" style="left:58px;top:50.2px;width:50px">不透明度(O):</span>
<div class="sl" style="left:112px;top:52.1px;width:49px"></div>
<svg style="left:146.5px;top:52.8px" width="5" height="5" viewBox="0 0 5 5"><path d="M2.5 0.4L4.5 2.2V4.6H0.5V2.2Z" fill="#e4e4e4" stroke="#777" stroke-width="0.6"/></svg>
<div class="inp" style="left:165.4px;top:50.7px;width:25.2px;height:7.1px"></div>
<span class="t" style="left:167.2px;top:50.15px">75</span>
<span class="t" style="left:192.3px;top:50.2px;font-size:6.6px">%</span>
<span class="t r" style="left:58px;top:60.7px;width:50px">杂色(N):</span>
<div class="sl" style="left:112px;top:62.6px;width:49px"></div>
<svg style="left:110.5px;top:63.3px" width="5" height="5" viewBox="0 0 5 5"><path d="M2.5 0.4L4.5 2.2V4.6H0.5V2.2Z" fill="#e4e4e4" stroke="#777" stroke-width="0.6"/></svg>
<div class="inp" style="left:165.4px;top:61.6px;width:25.2px;height:6.8px"></div>
<span class="t" style="left:167.2px;top:60.9px">0</span>
<span class="t" style="left:192.3px;top:60.8px;font-size:6.6px">%</span>
<div style="left:86.7px;top:74.0px;width:5.6px;height:5.6px;border-radius:50%;background:radial-gradient(#34435c 30%,#8aa2c0 52%,#dbe5ef 80%);border:0.6px solid #93a0b0"></div>
<div style="left:96.5px;top:72.8px;width:7px;height:8px;background:#fff;border:0.6px solid #c8c8c8"></div>
<div style="left:110.4px;top:74.0px;width:5.6px;height:5.6px;border-radius:50%;background:radial-gradient(#fafafa,#e2e2e2);border:0.6px solid #b0b0b0"></div>
<div style="left:119.8px;top:72.8px;width:59px;height:8.3px;border:0.8px solid #333;background:linear-gradient(90deg,#fff 0%,rgba(255,255,255,0.75) 45%,rgba(255,255,255,0.25) 100%),repeating-conic-gradient(#c4c4c4 0 25%,#fff 0 50%) 0 0/2.8px 2.8px"></div>
<div style="left:171.2px;top:72.8px;width:7.6px;height:8.3px;border:0.8px solid #333;background:#f4f4f4"></div>
<svg style="left:172.8px;top:75.8px" width="4.4" height="3" viewBox="0 0 4 3"><path d="M0 0.3H4L2 2.8Z" fill="#111"/></svg>
<span class="t r" style="left:58px;top:102.1px;width:50px">方法(Q):</span>
<div style="left:111px;top:102.3px;width:27.4px;height:8.2px;background:#fff;border:0.5px solid #dadada"></div>
<span class="t" style="left:114px;top:102.3px">精确</span>
<svg style="left:132.5px;top:105.2px" width="4" height="3" viewBox="0 0 4 3"><path d="M0 0.3H4L2 2.8Z" fill="#111"/></svg>
<span class="t r" style="left:58px;top:114.7px;width:50px">源:</span>
<div style="left:109.5px;top:116.1px;width:5.6px;height:5.6px;border-radius:50%;background:radial-gradient(#34435c 30%,#8aa2c0 52%,#dbe5ef 80%);border:0.6px solid #93a0b0"></div>
<span class="t" style="left:117px;top:114.7px">居中(E)</span>
<div style="left:145.7px;top:116.1px;width:5.6px;height:5.6px;border-radius:50%;background:radial-gradient(#fafafa,#e2e2e2);border:0.6px solid #b0b0b0"></div>
<span class="t" style="left:154px;top:114.7px">边缘(G)</span>
<span class="t r" style="left:58px;top:126.2px;width:50px">阻塞(C):</span>
<div class="sl" style="left:112px;top:128.1px;width:49px"></div>
<svg style="left:135.1px;top:128.8px" width="5" height="5" viewBox="0 0 5 5"><path d="M2.5 0.4L4.5 2.2V4.6H0.5V2.2Z" fill="#e4e4e4" stroke="#777" stroke-width="0.6"/></svg>
<div class="inp" style="left:165.4px;top:127.2px;width:25.2px;height:7.0px"></div>
<span class="t" style="left:167.2px;top:126.6px">53</span>
<span class="t" style="left:192.3px;top:126.4px;font-size:6.6px">%</span>
<span class="t r" style="left:58px;top:137.5px;width:50px">大小(S):</span>
<div class="sl" style="left:112px;top:139.4px;width:49px"></div>
<svg style="left:117.5px;top:140.1px" width="5" height="5" viewBox="0 0 5 5"><path d="M2.5 0.4L4.5 2.2V4.6H0.5V2.2Z" fill="#e4e4e4" stroke="#777" stroke-width="0.6"/></svg>
<div class="inp" style="left:165.4px;top:138px;width:25.2px;height:7px"></div>
<span class="t" style="left:167.2px;top:137.4px">27</span>
<span class="t" style="left:192.3px;top:137.5px">像素</span>
<span class="t r" style="left:58px;top:167.4px;width:50px">等高线:</span>
<div style="left:110.5px;top:164.2px;width:20.6px;height:15.2px;background:#fff;border:0.9px solid #444"></div>
<svg style="left:111.4px;top:165.1px" width="15" height="13.4" viewBox="0 0 15 13.4"><path d="M0.5 13.4L15 1V13.4Z" fill="#9a9a9a"/></svg>
<div style="left:126.3px;top:165.1px;width:4.2px;height:13.4px;background:#f2f2f2;border-left:0.6px solid #777"></div>
<svg style="left:127.1px;top:170.8px" width="3" height="2.4" viewBox="0 0 4 3"><path d="M0 0.3H4L2 2.8Z" fill="#111"/></svg>
<div class="cb" style="left:137.6px;top:168px"></div>
<span class="t" style="left:146px;top:167.1px">消除锯齿(L)</span>
<span class="t r" style="left:58px;top:181.8px;width:50px">范围(R):</span>
<div class="sl" style="left:112px;top:183.7px;width:49px"></div>
<svg style="left:134.0px;top:184.4px" width="5" height="5" viewBox="0 0 5 5"><path d="M2.5 0.4L4.5 2.2V4.6H0.5V2.2Z" fill="#e4e4e4" stroke="#777" stroke-width="0.6"/></svg>
<div class="inp" style="left:165.4px;top:182.6px;width:25.2px;height:7.0px"></div>
<span class="t" style="left:167.2px;top:182.0px">50</span>
<span class="t" style="left:192.3px;top:182.0px;font-size:6.6px">%</span>
<span class="t r" style="left:58px;top:192.8px;width:50px">抖动(J):</span>
<div class="sl" style="left:112px;top:194.7px;width:49px"></div>
<svg style="left:110.0px;top:195.4px" width="5" height="5" viewBox="0 0 5 5"><path d="M2.5 0.4L4.5 2.2V4.6H0.5V2.2Z" fill="#e4e4e4" stroke="#777" stroke-width="0.6"/></svg>
<div class="inp" style="left:165.4px;top:193.6px;width:25.2px;height:7.0px"></div>
<span class="t" style="left:167.2px;top:193.0px">0</span>
<span class="t" style="left:192.3px;top:193.0px;font-size:6.6px">%</span>
<div class="btn" style="left:95.8px;top:208.6px;width:47.3px">设置为默认值</div>
<div class="btn" style="left:147.8px;top:208.6px;width:48.4px">复位为默认值</div>
<div class="btn" style="left:240.3px;top:19.6px;width:53.8px;height:8.4px;border-color:#3c7fb1;box-shadow:inset 0 0 0 0.8px #5fd0f0;line-height:7.4px">确定</div>
<div class="btn" style="left:240.3px;top:33.4px;width:53.8px;height:8.2px;line-height:7.4px">复位</div>
<div class="btn" style="left:240.3px;top:46.7px;width:53.8px;height:8.4px;line-height:7.4px">新建样式(W)...</div>
<div class="cb" style="left:251px;top:60px"></div>
<svg style="left:251px;top:60px" width="6" height="6" viewBox="0 0 6 6"><path d="M1.3 3L2.6 4.5L4.8 1.4" stroke="#52629a" stroke-width="0.9" fill="none"/></svg>
<span class="t" style="left:259px;top:59.0px">预览(V)</span>
<div style="left:251px;top:69.8px;width:32.6px;height:30.8px;background:#d5d5d5"></div>
<div style="left:259px;top:78.4px;width:15.6px;height:15.4px;background:#222;border-radius:0.8px"></div>
<div style="left:260.8px;top:80px;width:11.8px;height:11.6px;background:radial-gradient(#e4e4e4,#c4c4c4 65%,#9a9a9a);border:0.8px solid #707070"></div>
</div>
</div>
</body>
</html>
